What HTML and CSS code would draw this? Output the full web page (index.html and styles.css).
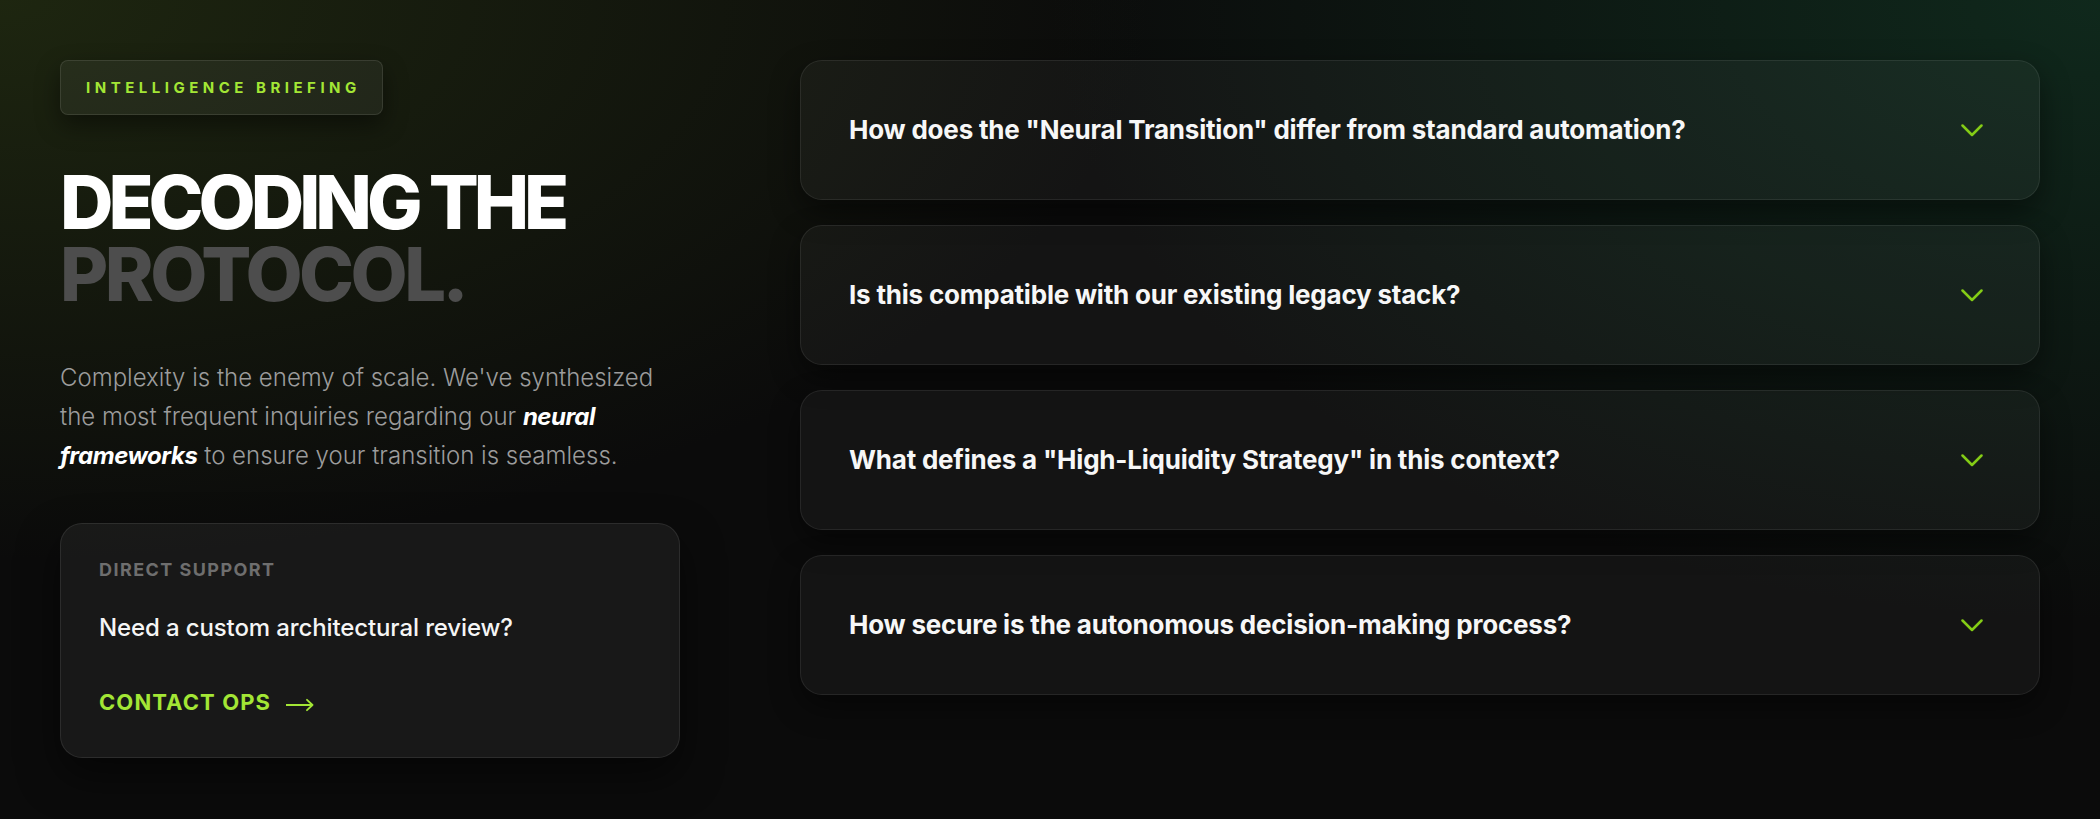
FILE: index.html
```html
<!DOCTYPE html>
<html lang="en">
<head>
<meta charset="utf-8">
<title>Decoding the Protocol</title>
<link rel="stylesheet" href="styles.css">
</head>
<body>
<main class="faq">
  <section class="intro">
    <div class="badge">INTELLIGENCE BRIEFING</div>
    <h1 class="title"><span class="title-line">DECODING THE</span><span class="title-line dim">PROTOCOL.</span></h1>
    <p class="lead">Complexity is the enemy of scale. We've synthesized the most frequent inquiries regarding our <em>neural frameworks</em> to ensure your transition is seamless.</p>
    <div class="support">
      <div class="support-label">DIRECT SUPPORT</div>
      <div class="support-text">Need a custom architectural review?</div>
      <a class="support-link" href="#">CONTACT OPS
        <svg class="arrow" width="28" height="14" viewBox="0 0 28 14" aria-hidden="true"><path d="M0 7H26.5M21 1.8L26.5 7L21 12.2" fill="none" stroke="currentColor" stroke-width="1.8" stroke-linecap="round" stroke-linejoin="round"/></svg>
      </a>
    </div>
  </section>
  <section class="questions">
    <div class="item">
      <span class="q">How does the "Neural Transition" differ from standard automation?</span>
      <svg class="chev" width="22" height="13" viewBox="0 0 22 13" aria-hidden="true"><polyline points="1.5,1.5 11,11 20.5,1.5" fill="none" stroke="currentColor" stroke-width="2.5" stroke-linecap="round" stroke-linejoin="round"/></svg>
    </div>
    <div class="item">
      <span class="q">Is this compatible with our existing legacy stack?</span>
      <svg class="chev" width="22" height="13" viewBox="0 0 22 13" aria-hidden="true"><polyline points="1.5,1.5 11,11 20.5,1.5" fill="none" stroke="currentColor" stroke-width="2.5" stroke-linecap="round" stroke-linejoin="round"/></svg>
    </div>
    <div class="item">
      <span class="q">What defines a "High-Liquidity Strategy" in this context?</span>
      <svg class="chev" width="22" height="13" viewBox="0 0 22 13" aria-hidden="true"><polyline points="1.5,1.5 11,11 20.5,1.5" fill="none" stroke="currentColor" stroke-width="2.5" stroke-linecap="round" stroke-linejoin="round"/></svg>
    </div>
    <div class="item">
      <span class="q">How secure is the autonomous decision-making process?</span>
      <svg class="chev" width="22" height="13" viewBox="0 0 22 13" aria-hidden="true"><polyline points="1.5,1.5 11,11 20.5,1.5" fill="none" stroke="currentColor" stroke-width="2.5" stroke-linecap="round" stroke-linejoin="round"/></svg>
    </div>
  </section>
</main>
</body>
</html>
```

FILE: styles.css
```css
* { box-sizing: border-box; }

html, body {
  margin: 0;
  height: 819px;
  overflow: hidden;
}

body {
  font-family: Inter, "Noto Sans", sans-serif;
  color: #f5f5f5;
  background-color: #0b0b0b;
  background-image:
    radial-gradient(ellipse 1150px 560px at 0 0, rgba(45, 60, 20, 0.55), rgba(45, 60, 20, 0) 100%),
    radial-gradient(ellipse 1050px 620px at 100% 0, rgba(20, 70, 45, 0.5), rgba(20, 70, 45, 0) 100%);
}

.faq {
  display: grid;
  grid-template-columns: 620px 1240px;
  column-gap: 120px;
  padding: 60px;
  align-items: start;
}

.intro {
  display: flex;
  flex-direction: column;
  align-items: flex-start;
}

.badge {
  font-size: 15px;
  line-height: 20px;
  font-weight: 700;
  letter-spacing: 0.3em;
  color: #a3e635;
  padding: 17px 21px 16px 25px;
  border: 1px solid rgba(255, 255, 255, 0.1);
  border-radius: 8px;
  background: rgba(255, 255, 255, 0.05);
  box-shadow: 0 10px 24px rgba(0, 0, 0, 0.45);
}

.title {
  margin: 51px 0 0;
  font-size: 74px;
  line-height: 72px;
  font-weight: 800;
  letter-spacing: -0.068em;
  display: flex;
  flex-direction: column;
}

.title-line { color: #ffffff; }
.title-line.dim { color: #4d4d4d; letter-spacing: -0.048em; }

.lead {
  margin: 48px 0 0;
  font-size: 24px;
  line-height: 39px;
  font-weight: 300;
  color: #9c9c9c;
  letter-spacing: 0;
}

.lead em {
  font-style: italic;
  font-weight: 700;
  color: #ffffff;
  letter-spacing: -0.02em;
}

.support {
  align-self: stretch;
  margin-top: 48px;
  padding: 34px 38px 41px;
  border: 1px solid rgba(255, 255, 255, 0.09);
  border-radius: 22px;
  background: rgba(255, 255, 255, 0.055);
  box-shadow: 0 18px 40px rgba(0, 0, 0, 0.5);
}

.support-label {
  font-size: 18px;
  line-height: 24px;
  font-weight: 700;
  letter-spacing: 0.08em;
  color: #6e6e6e;
}

.support-text {
  margin-top: 30px;
  font-size: 24px;
  line-height: 32px;
  font-weight: 500;
  color: #f5f5f5;
  letter-spacing: -0.005em;
}

.support-link {
  margin-top: 44px;
  display: flex;
  align-items: center;
  font-size: 22px;
  line-height: 28px;
  font-weight: 700;
  letter-spacing: 0.05em;
  color: #a3e635;
  text-decoration: none;
}

.arrow {
  margin-left: 15px;
  margin-top: 5px;
  color: #a3e635;
}

.questions {
  display: flex;
  flex-direction: column;
  gap: 25px;
}

.item {
  height: 140px;
  display: flex;
  align-items: center;
  justify-content: space-between;
  padding: 0 56px 0 48px;
  border: 1px solid rgba(255, 255, 255, 0.08);
  border-radius: 22px;
  background: rgba(255, 255, 255, 0.04);
  box-shadow: 0 12px 30px rgba(0, 0, 0, 0.45);
}

.q {
  font-size: 26px;
  line-height: 34px;
  font-weight: 700;
  letter-spacing: -0.008em;
  color: #f7f7f7;
}

.chev {
  flex: none;
  color: #84cc16;
}
```
